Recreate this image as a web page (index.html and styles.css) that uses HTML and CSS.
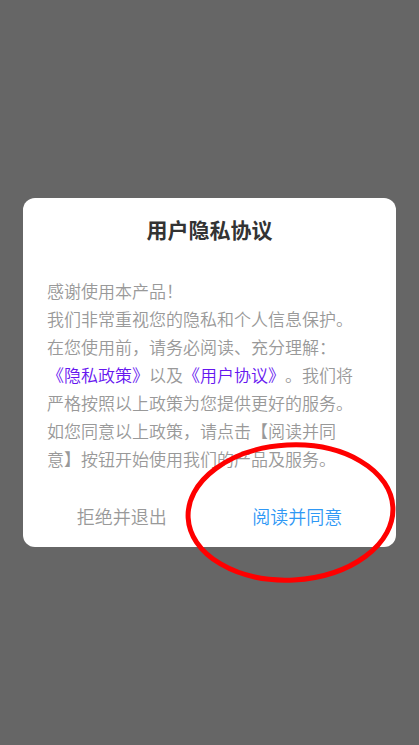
FILE: index.html
```html
<!DOCTYPE html>
<html lang="zh-CN">
<head>
<meta charset="utf-8">
<title>用户隐私协议</title>
<link rel="stylesheet" href="styles.css">
</head>
<body>
<div class="screen">
  <div class="dialog">
    <h1 class="title">用户隐私协议</h1>
    <div class="content">
      <p class="line">感谢使用本产品！</p>
      <p class="line">我们非常重视您的隐私和个人信息保护。</p>
      <p class="line">在您使用前，请务必阅读、充分理解：</p>
      <p class="line"><span class="link">《隐私政策》</span>以及<span class="link">《用户协议》</span>。我们将严格按照以上政策为您提供更好的服务。如您同意以上政策，请点击【阅读并同意】按钮开始使用我们的产品及服务。</p>
    </div>
    <div class="actions">
      <button class="btn btn-reject">拒绝并退出</button>
      <button class="btn btn-agree">阅读并同意</button>
    </div>
  </div>
  <svg class="mark" width="419" height="745" viewBox="0 0 419 745" aria-hidden="true">
    <ellipse cx="290.5" cy="512.5" rx="102.5" ry="67.5" transform="rotate(-3 290.5 512.5)" fill="none" stroke="#ff0000" stroke-width="5"/>
  </svg>
</div>
</body>
</html>
```
FILE: styles.css
```css
html, body {
  margin: 0;
  padding: 0;
  background: #666666;
}
.screen {
  position: relative;
  width: 419px;
  height: 745px;
  display: flex;
  align-items: center;
  justify-content: center;
  font-family: "Noto Sans CJK SC", "Noto Sans", sans-serif;
}
.dialog {
  width: 373px;
  height: 349px;
  box-sizing: border-box;
  background: #ffffff;
  border-radius: 12px;
  padding-top: 17px;
  padding-bottom: 2px;
  display: flex;
  flex-direction: column;
}
.title {
  margin: 0;
  font-size: 21px;
  line-height: 28px;
  font-weight: 700;
  color: #333333;
  text-align: center;
}
.content {
  margin-top: 34px;
  padding: 0 28px 0 24px;
  font-size: 17px;
  line-height: 28px;
  font-weight: 350;
  color: #999999;
  text-spacing-trim: space-all;
  line-break: strict;
}
.line {
  margin: 0;
}
.link {
  color: #6616f0;
}
.actions {
  margin-top: auto;
  height: 58px;
  padding: 0 11px;
  display: flex;
}
.btn {
  flex: 1;
  border: none;
  background: transparent;
  font-family: inherit;
  font-size: 18px;
  font-weight: 350;
  padding: 0;
  cursor: pointer;
}
.btn-reject {
  color: #999999;
}
.btn-agree {
  color: #2f98f5;
}
.mark {
  position: absolute;
  left: 0;
  top: 0;
  pointer-events: none;
}
```
